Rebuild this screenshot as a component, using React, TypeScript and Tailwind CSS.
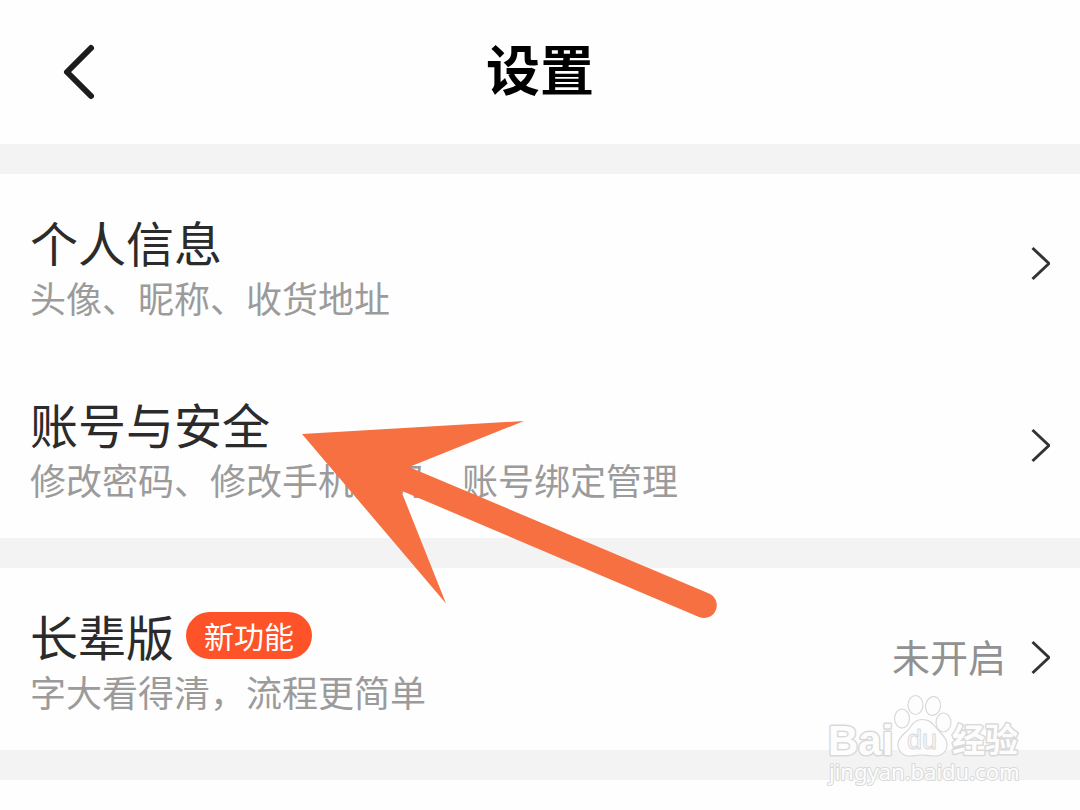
import { ReactNode } from 'react'

type RowProps = {
  title: string
  desc: string
  badge?: string
  value?: string
}

const BackIcon = () => (
  <svg width="36" height="60" viewBox="0 0 36 60" fill="none" stroke="#1c1c1c" strokeWidth="6" strokeLinecap="round" strokeLinejoin="round">
    <path d="M31 6 7 30 31 54" />
  </svg>
)

const ChevronIcon = () => (
  <svg className="shrink-0" width="20" height="36" viewBox="0 0 20 36" fill="none" stroke="#333" strokeWidth="3">
    <path d="M2.500 2 19 17.500 2.500 33" />
  </svg>
)

const Row = ({ title, desc, badge, value }: RowProps) => {
  return (
    <a href="#" className="flex items-center justify-between px-[30px] pt-[29px] pb-[31px]">
      <div className="pt-[10px]">
        <div className="flex items-center gap-3">
          <span className="text-[48px] leading-[56px] text-[#2b2b2b]">{title}</span>
          {badge && (
            <span className="rounded-full bg-[#fe5328] px-[18px] text-[30px] leading-[47px] text-white">{badge}</span>
          )}
        </div>
        <p className="text-[36px] leading-[56px] text-[#9b9b9b]">{desc}</p>
      </div>
      <div className="flex items-center gap-6">
        {value && <span className="pb-1 text-[38px] leading-[56px] text-[#919191]">{value}</span>}
        <ChevronIcon />
      </div>
    </a>
  )
}

const Section = ({ children }: { children: ReactNode }) => (
  <section className="border-b-[30px] border-[#f3f3f3]">{children}</section>
)

const Arrow = () => (
  <svg className="pointer-events-none absolute left-[300px] top-[418px]" width="420" height="202" viewBox="300 418 420 202" fill="#f67041">
    <path d="M302 434 524 421 409 467 709 593.500A12.500 12.500 0 0 1 699 617L401 490.500 446 603.500Z" />
  </svg>
)

const Watermark = () => (
  <svg
    className="pointer-events-none absolute right-[54px] top-[690px]"
    width="200"
    height="100"
    viewBox="826 690 200 100"
    fill="#fdfdfd"
    stroke="#d9d9d9"
    strokeWidth="1.2"
    strokeLinejoin="round"
  >
    <text x="828" y="755" strokeWidth="3" className="font-['Liberation_Sans'] text-[42px] font-bold [paint-order:stroke]">Bai</text>
    <ellipse cx="902" cy="718.500" rx="7.500" ry="9.500" />
    <ellipse cx="915.500" cy="705" rx="7.500" ry="9.500" />
    <ellipse cx="933" cy="706" rx="7.500" ry="9.500" transform="rotate(10 933 706)" />
    <ellipse cx="943.500" cy="722.500" rx="7.500" ry="9.500" />
    <path d="M922 719.500c-6 0-9 3-12 8-4 6-12 9-12 17 0 7 5 11.500 12 11.500 5 0 8-1 12-1s8 1 13 1c7 0 12-4.500 12-11.500 0-8-7-11-11-17-4-5-7-8-14-8Z" />
    <text x="907" y="749" strokeWidth="1" className="font-['Liberation_Sans'] text-[27px]">du</text>
    <text x="952" y="752" strokeWidth="3" className="font-['Noto_Sans_CJK_SC'] text-[33px] font-bold [paint-order:stroke]">经验</text>
    <text x="829" y="780" strokeWidth="2" className="font-['Noto_Sans'] text-[22px] [paint-order:stroke]">jingyan.baidu.com</text>
  </svg>
)

const App = () => {
  return (
    <main className="relative min-h-screen bg-[#fefefe] font-['Noto_Sans_CJK_SC',sans-serif]">
      <header className="grid h-[174px] grid-cols-3 items-center border-b-[30px] border-[#f3f3f3] px-[60px]">
        <button type="button" aria-label="返回" className="justify-self-start">
          <BackIcon />
        </button>
        <h1 className="pb-2 text-center text-[54px] leading-[56px] font-bold text-black">设置</h1>
      </header>
      <Section>
        <Row title="个人信息" desc="头像、昵称、收货地址" />
        <Row title="账号与安全" desc="修改密码、修改手机号码、账号绑定管理" />
      </Section>
      <Section>
        <Row title="长辈版" badge="新功能" desc="字大看得清，流程更简单" value="未开启" />
      </Section>
      <Arrow />
      <Watermark />
    </main>
  )
}

export default App
